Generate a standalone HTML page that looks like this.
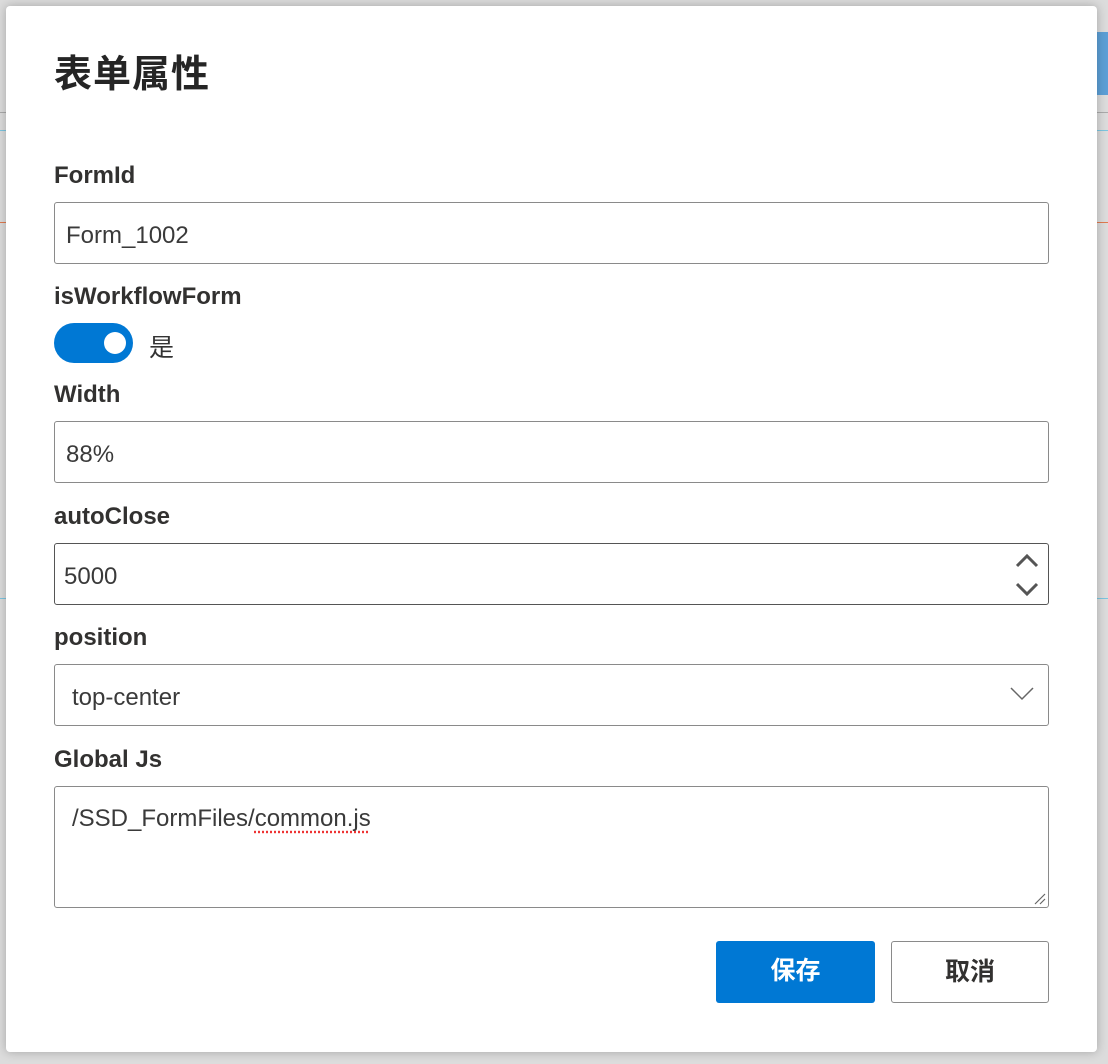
<!DOCTYPE html>
<html><head><meta charset="utf-8"><style>
html,body{margin:0;padding:0;}
body{width:1108px;height:1064px;background:#dcdcdc;position:relative;overflow:hidden;font-family:"Liberation Sans","Noto Sans CJK SC",sans-serif;color:#323130;}
.bgline{position:absolute;left:0;width:1108px;height:1px;}
.dlg{position:absolute;left:6px;top:6px;width:1091px;height:1046px;background:#fff;border-radius:4px;box-shadow:0 0 10px rgba(0,0,0,.25);}
.title{position:absolute;left:48px;top:37px;font-size:38px;font-weight:bold;color:#252525;letter-spacing:1px;}
.lbl{position:absolute;left:48px;font-size:24px;font-weight:bold;color:#323130;}
.inp{position:absolute;left:48px;border:1px solid #8a8a8a;border-radius:3px;box-sizing:border-box;width:995px;height:62px;font-size:24px;color:#3a3a3a;}
.inp span{position:absolute;left:11px;top:19px;}
.btn{position:absolute;top:935px;height:62px;box-sizing:border-box;border-radius:3px;font-size:25px;font-weight:bold;text-align:center;line-height:60px;}
</style></head><body>
<div class="bgline" style="top:112px;background:#aaa"></div>
<div class="bgline" style="top:130px;background:#7cc5e0"></div>
<div class="bgline" style="top:222px;background:#e07a50"></div>
<div class="bgline" style="top:598px;background:#7cc5e0"></div>
<div style="position:absolute;left:1097px;top:32px;width:11px;height:63px;background:#5c9fd6"></div>
<div class="dlg">
<div class="title">表单属性</div>
<div class="lbl" style="top:156px">FormId</div>
<div class="inp" style="top:196px"><span>Form_1002</span></div>
<div class="lbl" style="top:277px">isWorkflowForm</div>
<div style="position:absolute;left:48px;top:317px;width:79px;height:40px;border-radius:20px;background:#0078d4"></div>
<div style="position:absolute;left:98px;top:326px;width:22px;height:22px;border-radius:50%;background:#fff"></div>
<div style="position:absolute;left:143px;top:322px;font-size:25px;color:#333">是</div>
<div class="lbl" style="top:375px">Width</div>
<div class="inp" style="top:415px"><span>88%</span></div>
<div class="lbl" style="top:497px">autoClose</div>
<div class="inp" style="top:537px;border-color:#555;border-width:1.5px"><span style="left:9px">5000</span>
<svg style="position:absolute;right:8px;top:8px" width="26" height="46" viewBox="0 0 26 46"><path d="M3 14 L13 4 L23 14 M3 32 L13 42 L23 32" fill="none" stroke="#555" stroke-width="3"/></svg></div>
<div class="lbl" style="top:618px">position</div>
<div class="inp" style="top:658px"><span style="left:17px">top-center</span>
<svg style="position:absolute;right:14px;top:22px" width="24" height="14" viewBox="0 0 24 14"><path d="M1 1 L12 12 L23 1" fill="none" stroke="#666" stroke-width="1.5"/></svg></div>
<div class="lbl" style="top:740px">Global Js</div>
<div class="inp" style="top:780px;height:122px"><span style="left:17px;top:18px">/SSD_FormFiles/<span style="position:static;text-decoration:underline dotted #e33;text-underline-offset:5px">common.js</span></span>
<svg style="position:absolute;right:2px;bottom:2px" width="14" height="14" viewBox="0 0 14 14"><path d="M13 3 L3 13 M13 8 L8 13" stroke="#666" stroke-width="1.2"/></svg></div>
<div class="btn" style="left:710px;width:159px;background:#0078d4;color:#fff">保存</div>
<div class="btn" style="left:885px;width:158px;border:1px solid #8a8a8a;color:#323130">取消</div>
</div>
</body></html>
